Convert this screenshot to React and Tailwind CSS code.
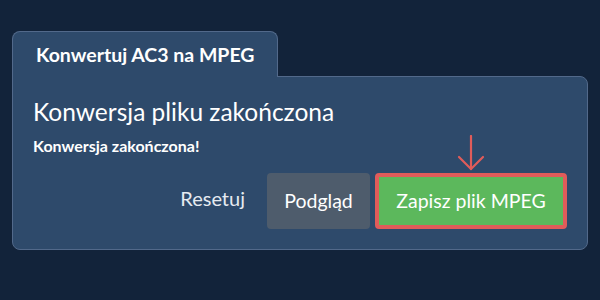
export default function App() {
  return (
    <div className="h-[300px] w-[600px] bg-[#12233a] px-3 pt-[31px] font-['Lato',sans-serif]">
      <div className="relative z-10 -mb-px flex h-[46px] w-[266px] items-center rounded-t-lg border border-b-0 border-[#52698a] bg-[#2e4a6b] pl-[23px]">
        <span className="text-[19.5px] font-bold text-white">Konwertuj AC3 na MPEG</span>
      </div>
      <div className="flex h-[174px] w-[576px] flex-col rounded-b-lg rounded-tr-lg border border-[#52698a] bg-[#2e4a6b] px-5 pb-5 pt-[19px]">
        <h2 className="text-[24.5px] leading-[32px] text-white">Konwersja pliku zakończona</h2>
        <p className="mt-[8px] text-[16px] font-bold leading-5 text-white">Konwersja zakończona!</p>
        <div className="mt-auto flex items-end justify-end gap-[5px]">
          <button className="mb-[16px] mr-[17px] text-[20px] text-[#e6ebf1]">Resetuj</button>
          <button className="h-[56px] w-[103px] rounded bg-[#4e5c6c] text-[19.5px] text-white">Podgląd</button>
          <div className="relative">
            <svg className="absolute -top-[38px] left-[82px]" width="28" height="36" viewBox="0 0 28 36" fill="none" stroke="#e05c5a" strokeWidth="2.2" strokeLinecap="round">
              <path d="M14 1 V34" />
              <path d="M2 22 L14 34 L26 22" />
            </svg>
            <button className="h-[56px] w-[192px] rounded border-4 border-[#e05c5a] bg-[#5cb85c] text-[19.5px] text-white">Zapisz plik MPEG</button>
          </div>
        </div>
      </div>
    </div>
  );
}
